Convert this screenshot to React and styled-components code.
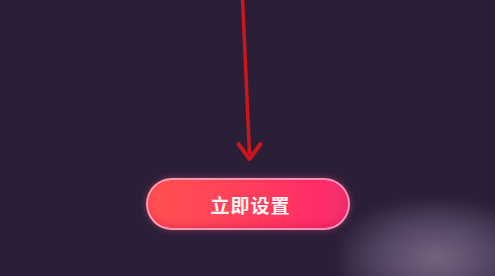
import React from 'react';
import styled, { createGlobalStyle } from 'styled-components';

const Global = createGlobalStyle`
  html, body { margin: 0; padding: 0; background: #2b1f37; }
  body { font-family: "Noto Sans CJK SC", "Noto Sans", sans-serif; }
`;

const Screen = styled.div`
  position: relative;
  width: 495px;
  height: 276px;
  overflow: hidden;
  background: #2b1f37;
  display: flex;
  flex-direction: column;
  align-items: center;
`;

const Arrow = styled.svg`
  display: block;
  width: 60px;
  height: 178px;
`;

const ActionButton = styled.button`
  width: 204px;
  height: 52px;
  border-radius: 26px;
  border: 2px solid rgba(255, 190, 215, 0.7);
  background: linear-gradient(90deg, #ff5150 0%, #ff4358 40%, #ff2c68 85%, #f2306e 100%);
  box-shadow: 0 0 6px rgba(255, 80, 140, 0.45), inset 0 -3px 6px rgba(200, 0, 80, 0.3);
  color: #fff4f4;
  font-family: "Noto Sans CJK SC", sans-serif;
  font-size: 19px;
  font-weight: 700;
  letter-spacing: 1px;
  display: flex;
  align-items: center;
  justify-content: center;
  padding: 0 0 0 6px;
`;

const Watermark = styled.div`
  position: absolute;
  right: -20px;
  bottom: -20px;
  width: 175px;
  height: 95px;
  background: radial-gradient(ellipse at 55% 60%, rgba(150, 132, 162, 0.7) 0%, rgba(118, 100, 135, 0.5) 45%, rgba(43, 31, 55, 0) 78%);
  filter: blur(5px);
  pointer-events: none;
`;

export default function App() {
  return (
    <>
      <Global />
      <Screen>
        <Arrow viewBox="0 0 60 178">
          <line x1="24.5" y1="-2" x2="31.5" y2="154" stroke="#cc161d" strokeWidth="3.5" />
          <polyline points="20.5,144 31.5,159 42.5,144" fill="none" stroke="#cc161d" strokeWidth="4" strokeLinecap="round" strokeLinejoin="round" />
        </Arrow>
        <ActionButton>立即设置</ActionButton>
        <Watermark />
      </Screen>
    </>
  );
}
